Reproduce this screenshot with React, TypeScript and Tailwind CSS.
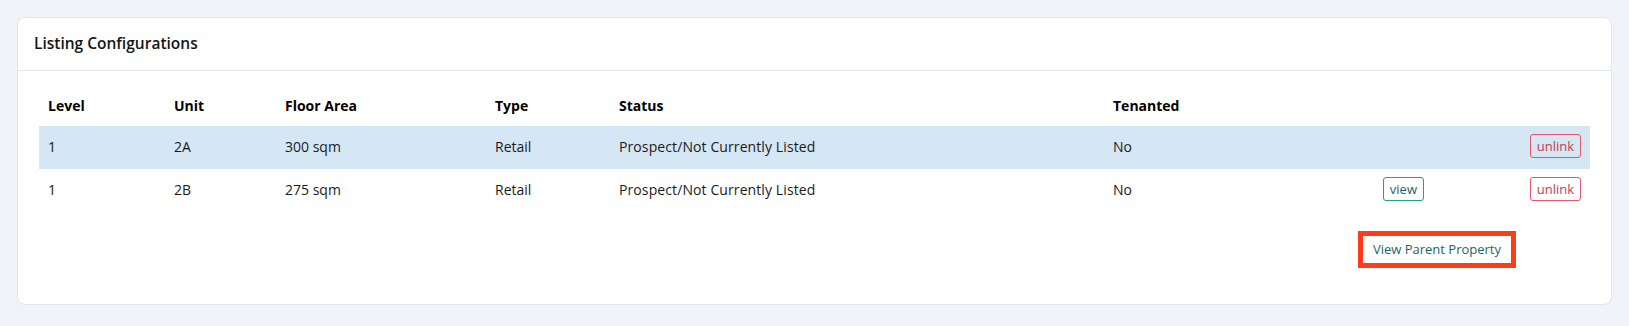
import React from "react";

const rows = [
  { level: "1", unit: "2A", area: "300 sqm", type: "Retail", status: "Prospect/Not Currently Listed", tenanted: "No", view: false, active: true },
  { level: "1", unit: "2B", area: "275 sqm", type: "Retail", status: "Prospect/Not Currently Listed", tenanted: "No", view: true, active: false },
];

const cols = "grid grid-cols-[126px_111px_210px_124px_494px_196px_133px_1fr]";

const App = () => {
  return (
    <div className="bg-[#f2f3f8] min-h-screen pt-[17px] pl-[17px] pr-[17px] font-['Open_Sans',sans-serif] text-[#1b1b1b]">
      <div className="bg-white border border-[#e3e5eb] rounded-lg">
        <div className="h-[53px] border-b border-[#e3e5eb] flex items-center pl-[16px]">
          <h2 className="text-[15.5px] font-semibold text-[#141414]">Listing Configurations</h2>
        </div>
        <div className="px-[21px] pt-[15px] pb-[36px]">
          <div className={`${cols} h-[40px] pb-[2px] items-center text-[14px] font-bold text-black`}>
            <div className="pl-[9px]">Level</div>
            <div className="pl-[9px]">Unit</div>
            <div className="pl-[9px]">Floor Area</div>
            <div className="pl-[9px]">Type</div>
            <div className="pl-[9px]">Status</div>
            <div className="pl-[9px]">Tenanted</div>
            <div></div>
            <div></div>
          </div>
          {rows.map((r) => (
            <div
              key={r.unit}
              className={`${cols} h-[43px] pb-[3px] items-center text-[14px] ${r.active ? "bg-[#d5e6f4]" : "bg-white"}`}
            >
              <div className="pl-[9px]">{r.level}</div>
              <div className="pl-[9px]">{r.unit}</div>
              <div className="pl-[9px]">{r.area}</div>
              <div className="pl-[9px]">{r.type}</div>
              <div className="pl-[9px] tracking-[0.1px]">{r.status}</div>
              <div className="pl-[9px]">{r.tenanted}</div>
              <div className="flex justify-end pr-[9px]">
                {r.view && (
                  <button className="h-[24px] px-[6px] border border-[#1aa484] rounded-[3px] text-[13px] text-[#1e5f66] leading-none">
                    view
                  </button>
                )}
              </div>
              <div className="flex justify-end pr-[9px]">
                <button className="h-[24px] px-[6px] border border-[#e5566a] rounded-[3px] text-[13px] text-[#c63c52] leading-none">
                  unlink
                </button>
              </div>
            </div>
          ))}
          <div className="flex justify-end pr-[74px] mt-[19px]">
            <div className="border-[5px] border-[#ff3b1c]">
              <button className="h-[26px] px-[10px] text-[13px] text-[#1f6468] leading-none">
                View Parent Property
              </button>
            </div>
          </div>
        </div>
      </div>
    </div>
  );
};

export default App;
